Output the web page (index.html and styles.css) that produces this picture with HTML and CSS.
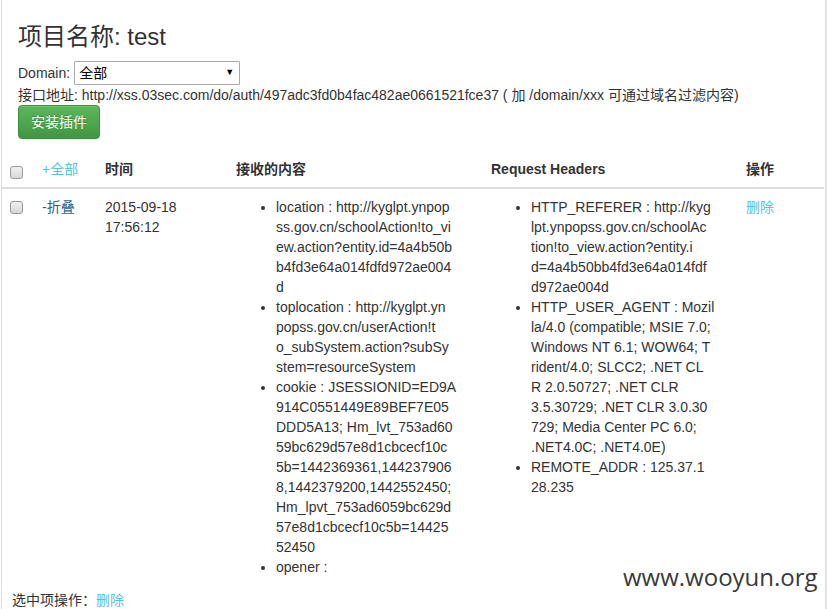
FILE: index.html
```html
<!DOCTYPE html>
<html lang="zh-CN">
<head>
<meta charset="utf-8">
<title>项目名称: test</title>
<link rel="stylesheet" href="styles.css">
</head>
<body>
<div class="page">
  <div class="top">
    <h3 class="title">项目名称: test</h3>
    <div class="domain-row">
      <span class="label">Domain:</span>
      <span class="select-wrap">
        <select class="domain-select"><option>全部</option></select>
        <span class="select-arrow">▼</span>
      </span>
    </div>
    <div class="api-line">接口地址: http://xss.03sec.com/do/auth/497adc3fd0b4fac482ae0661521fce37 ( 加 /domain/xxx 可通过域名过滤内容)</div>
    <button class="btn-success" type="button">安装插件</button>
  </div>

  <table class="data-table">
    <colgroup>
      <col class="c-check">
      <col class="c-toggle">
      <col class="c-time">
      <col class="c-content">
      <col class="c-headers">
      <col class="c-ops">
    </colgroup>
    <thead>
      <tr>
        <th><input type="checkbox" class="cb cb-head"></th>
        <th><a class="link-light" href="#">+全部</a></th>
        <th>时间</th>
        <th>接收的内容</th>
        <th>Request Headers</th>
        <th>操作</th>
      </tr>
    </thead>
    <tbody>
      <tr>
        <td><input type="checkbox" class="cb cb-body"></td>
        <td><a class="link-dark" href="#">-折叠</a></td>
        <td>2015-09-18<br>17:56:12</td>
        <td>
          <ul class="kv-list">
            <li>location : http://kyglpt.ynpop<br>ss.gov.cn/schoolAction!to_vi<br>ew.action?entity.id=4a4b50b<br>b4fd3e64a014fdfd972ae004<br>d</li>
            <li>toplocation : http://kyglpt.yn<br>popss.gov.cn/userAction!t<br>o_subSystem.action?subSy<br>stem=resourceSystem</li>
            <li>cookie : JSESSIONID=ED9A<br>914C0551449E89BEF7E05<br>DDD5A13; Hm_lvt_753ad60<br>59bc629d57e8d1cbcecf10c<br>5b=1442369361,144237906<br>8,1442379200,1442552450;<br>Hm_lpvt_753ad6059bc629d<br>57e8d1cbcecf10c5b=14425<br>52450</li>
            <li>opener : </li>
          </ul>
        </td>
        <td>
          <ul class="kv-list">
            <li>HTTP_REFERER : http://kyg<br>lpt.ynpopss.gov.cn/schoolAc<br>tion!to_view.action?entity.i<br>d=4a4b50bb4fd3e64a014fdf<br>d972ae004d</li>
            <li>HTTP_USER_AGENT : Mozil<br>la/4.0 (compatible; MSIE 7.0;<br>Windows NT 6.1; WOW64; T<br>rident/4.0; SLCC2; .NET CL<br>R 2.0.50727; .NET CLR<br>3.5.30729; .NET CLR 3.0.30<br>729; Media Center PC 6.0;<br>.NET4.0C; .NET4.0E)</li>
            <li>REMOTE_ADDR : 125.37.1<br>28.235</li>
          </ul>
        </td>
        <td><a class="link-light" href="#">删除</a></td>
      </tr>
    </tbody>
  </table>

  <div class="footer">选中项操作：<a class="link-light" href="#">删除</a></div>

  <div class="watermark">www.wooyun.org</div>
</div>
</body>
</html>
```
FILE: styles.css
```css
html, body {
  margin: 0;
  padding: 0;
  background: #fff;
}
body {
  font-family: "Liberation Sans", Arial, "Noto Sans CJK SC", sans-serif;
  font-size: 14px;
  line-height: 20px;
  color: #333;
  overflow: hidden;
}
.page {
  position: relative;
  margin-left: 1px;
  width: 823px;
  min-height: 609px;
  border-left: 1px solid #dddddd;
  border-right: 2px solid #e2e2e2;
}
.top {
  padding: 24px 16px 0 16px;
}
.title {
  margin: 0;
  font-size: 24px;
  line-height: 26px;
  font-weight: 400;
  color: #333;
}
.domain-row {
  margin-top: 11px;
  height: 24px;
  display: flex;
  align-items: center;
}
.label {
  margin-right: 4px;
}
.select-wrap {
  position: relative;
  display: block;
  width: 166px;
  height: 24px;
}
.domain-select {
  -webkit-appearance: none;
  appearance: none;
  box-sizing: border-box;
  width: 166px;
  height: 24px;
  margin: 0;
  padding: 0 4px;
  border: 1px solid #a9a9a9;
  border-radius: 1px;
  background: #fff;
  color: #000;
  font-family: "Liberation Sans", Arial, "Noto Sans CJK SC", sans-serif;
  font-size: 14px;
}
.select-arrow {
  position: absolute;
  right: 6px;
  top: 5px;
  font-size: 9px;
  line-height: 12px;
  color: #000;
  pointer-events: none;
}
.api-line {
  line-height: 20px;
}
.btn-success {
  display: block;
  box-sizing: border-box;
  height: 34px;
  padding: 6px 12px;
  margin: 0;
  font-family: "Liberation Sans", Arial, "Noto Sans CJK SC", sans-serif;
  font-size: 14px;
  line-height: 20px;
  color: #fff;
  border: 1px solid #3e8f3e;
  border-radius: 4px;
  background-image: linear-gradient(to bottom, #5cb85c 0, #419641 100%);
  text-shadow: 0 -1px 0 rgba(0, 0, 0, .2);
  box-shadow: inset 0 1px 0 rgba(255, 255, 255, .15), 0 1px 1px rgba(0, 0, 0, .075);
}
.data-table {
  margin-top: 12px;
  width: 822px;
  table-layout: fixed;
  border-collapse: collapse;
  border-spacing: 0;
}
.c-check { width: 32px; }
.c-toggle { width: 63px; }
.c-time { width: 131px; }
.c-content { width: 255px; }
.c-headers { width: 255px; }
.c-ops { width: 86px; }
.data-table th {
  padding: 8px;
  text-align: left;
  vertical-align: bottom;
  font-weight: bold;
  line-height: 20px;
  border-bottom: 2px solid #dddddd;
}
.data-table td {
  padding: 8px 8px 0 8px;
  vertical-align: top;
  line-height: 20px;
}
.cb {
  -webkit-appearance: none;
  appearance: none;
  display: block;
  box-sizing: border-box;
  width: 13px;
  height: 13px;
  margin: 0;
  border: 1px solid #9a9a9a;
  border-radius: 3px;
  background: linear-gradient(to bottom, #f0f0f0, #d8d8d8);
}
.cb-head { margin-top: 2px; }
.cb-body { margin-top: 4px; }
.data-table th .link-light {
  font-weight: normal;
}
.link-light {
  color: #5bc0de;
  text-decoration: none;
}
.link-dark {
  color: #2a6496;
  text-decoration: none;
}
.kv-list {
  margin: 0;
  padding-left: 40px;
}
.kv-list li {
  white-space: nowrap;
}
.footer {
  padding: 13px 0 0 10px;
  line-height: 20px;
}
.watermark {
  position: absolute;
  left: 621px;
  top: 565px;
  font-family: "Open Sans", sans-serif;
  font-size: 24px;
  line-height: 24px;
  color: #3a3a3a;
}
```
